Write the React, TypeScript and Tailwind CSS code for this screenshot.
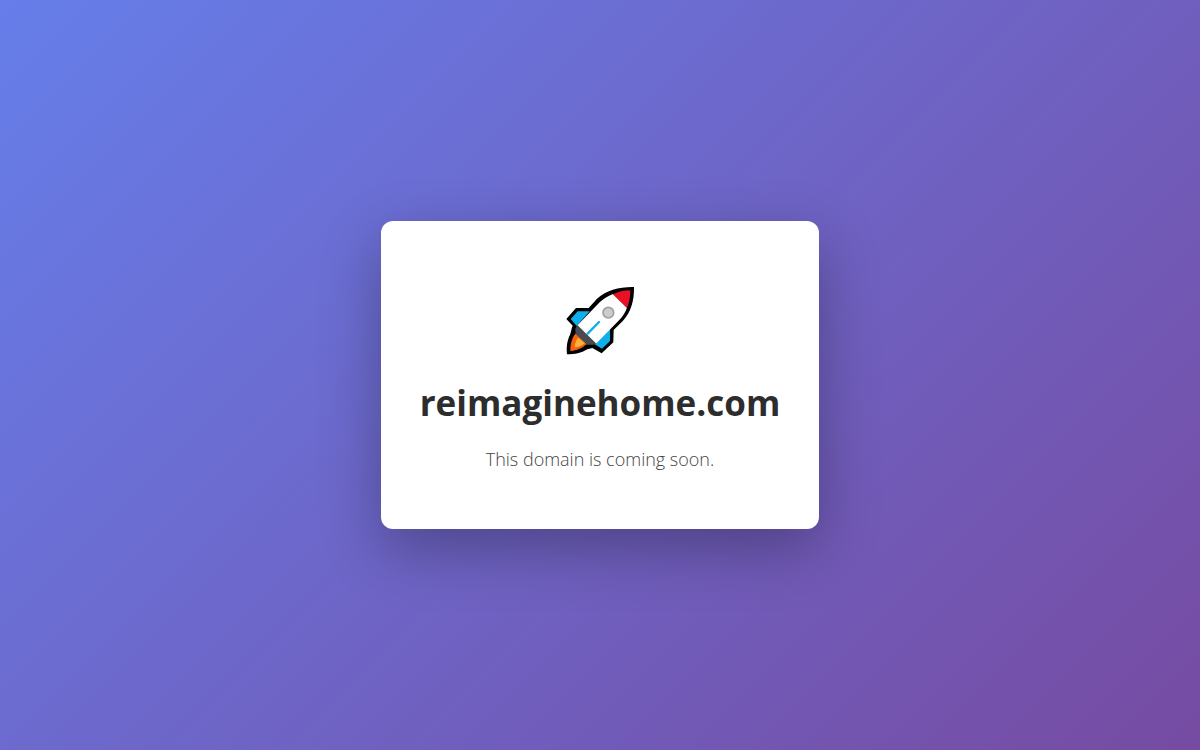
function Rocket() {
  return (
    <svg viewBox="27 15 216 216" className="size-18" role="img" aria-label="Rocket">
      {/* Outline */}
      <path
        d="M237 21 C195 20 153 31 126 56 L101 84 L63 84 L34 117 L53 137 C49 145 49 154 45 164 C36 183 34 200 36 223 C60 223 78 220 97 208 L112 204 L140 220 L175 187 L176 150 L204 122 C227 98 238 63 237 21Z"
        fill="#000"
      />
      {/* Fins */}
      <path d="M68 94 L104 94 L65 138 L47 117Z" fill="#10aeea" />
      <path d="M165 144 L165 183 L141 206 L118 192Z" fill="#10aeea" />
      {/* Body */}
      <path
        d="M174 42 C158 48 144 57 134 67 L66 137 L123 191 L190 123 C202 111 211 97 216 83Z"
        fill="#fff"
      />
      <path d="M226 31 C207 31 190 35 174 43 L216 84 C222 70 226 53 226 31Z" fill="#e81224" />
      <path d="M67 135 L124 191 L115 194 L90 194 L62 166 L61 146Z" fill="#484b4f" />
      {/* Flame */}
      <path d="M61 161 L94 192 C82 205 66 211 46 213 C46 195 49 177 61 161Z" fill="#f7630c" />
      <path d="M70 173 L89 190 C79 198 70 202 59 202 C59 191 63 181 70 173Z" fill="#fcb040" />
      <circle cx="160" cy="98" r="16" fill="#cccccc" stroke="#a0a0a0" strokeWidth="5" />
      <path d="M132 126 L98 161" stroke="#10aeea" strokeWidth="7" strokeLinecap="round" />
    </svg>
  );
}

function App() {
  return (
    <main className="min-h-screen flex items-center justify-center bg-[linear-gradient(135deg,#667eea_0%,#764ba2_100%)] font-['Open_Sans','Noto_Sans',sans-serif]">
      <section className="flex flex-col items-center rounded-xl bg-white px-[39px] pt-16 pb-14 text-center shadow-[0_20px_60px_rgba(0,0,0,0.3)]">
        <Rocket />
        <h1 className="mt-5 text-[35px] leading-[52px] font-bold text-[#2d2d2d]">
          reimaginehome.com
        </h1>
        <p className="mt-[18px] mb-0.5 text-lg leading-6 font-light text-[#444]">
          This domain is coming soon.
        </p>
      </section>
    </main>
  );
}

export default App;
